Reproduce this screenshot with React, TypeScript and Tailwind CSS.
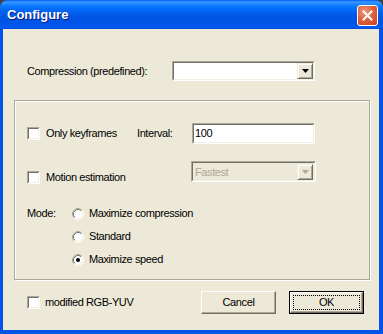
import React from "react";

function Sunken({ className, innerClass, children }: { className: string; innerClass: string; children?: React.ReactNode }) {
  return (
    <div className={`border border-t-[#aca899] border-l-[#aca899] border-b-white border-r-white ${className}`}>
      <div className={`h-full w-full border border-t-[#716f64] border-l-[#716f64] border-b-[#f1efe2] border-r-[#f1efe2] ${innerClass}`}>
        {children}
      </div>
    </div>
  );
}

function Checkbox() {
  return <Sunken className="w-[13px] h-[13px] shrink-0" innerClass="bg-white" />;
}

function Radio({ checked }: { checked?: boolean }) {
  return (
    <svg width="12" height="12" viewBox="0 0 12 12" className="shrink-0">
      <circle cx="6" cy="6" r="5" fill="#ffffff" />
      <path d="M2.11 9.89 A5.5 5.5 0 0 1 9.89 2.11" fill="none" stroke="#aca899" strokeWidth="1" />
      <path d="M9.89 2.11 A5.5 5.5 0 0 1 2.11 9.89" fill="none" stroke="#ffffff" strokeWidth="1" />
      <path d="M2.82 9.18 A4.5 4.5 0 0 1 9.18 2.82" fill="none" stroke="#716f64" strokeWidth="1" />
      <path d="M9.18 2.82 A4.5 4.5 0 0 1 2.82 9.18" fill="none" stroke="#f1efe2" strokeWidth="1" />
      {checked && <circle cx="6" cy="6" r="2" fill="#000000" />}
    </svg>
  );
}

function DropButton({ disabled }: { disabled?: boolean }) {
  return (
    <div className="w-[16px] h-[16px] border border-t-[#f1efe2] border-l-[#f1efe2] border-b-[#716f64] border-r-[#716f64] bg-[#ece9d8] shadow-[inset_1px_1px_0_#ffffff,inset_-1px_-1px_0_#aca899] flex items-center justify-center">
      <svg width="7" height="4" viewBox="0 0 7 4">
        <path d="M0 0 H7 L3.5 4 Z" fill={disabled ? "#aca899" : "#000000"} />
      </svg>
    </div>
  );
}

function Button({ children, isDefault }: { children: React.ReactNode; isDefault?: boolean }) {
  if (isDefault) {
    return (
      <div className="w-[75px] h-[23px] border border-black">
        <div className="h-full w-full border border-t-white border-l-white border-b-[#716f64] border-r-[#716f64] bg-[#ece9d8] shadow-[inset_-1px_-1px_0_#aca899] flex items-center justify-center p-[2px]">
          <div className="h-full w-full border border-dotted border-black flex items-center justify-center">
            {children}
          </div>
        </div>
      </div>
    );
  }
  return (
    <div className="w-[75px] h-[23px] border border-t-white border-l-white border-b-[#716f64] border-r-[#716f64] bg-[#ece9d8] shadow-[inset_-1px_-1px_0_#aca899] flex items-center justify-center">
      {children}
    </div>
  );
}

function CloseButton() {
  return (
    <div className="w-[21px] h-[21px] rounded-[3px] border border-white bg-[radial-gradient(circle_at_35%_30%,#f0967a_0%,#e0643f_45%,#c8401b_100%)] flex items-center justify-center">
      <svg width="11" height="11" viewBox="0 0 11 11">
        <path d="M1.5 1.5 L9.5 9.5 M9.5 1.5 L1.5 9.5" stroke="#ffffff" strokeWidth="2" strokeLinecap="square" />
      </svg>
    </div>
  );
}

export default function App() {
  return (
    <div className="w-[383px] h-[334px] bg-[#404040] font-['Liberation_Sans',Arial,sans-serif]">
      <div className="w-[383px] h-[334px] rounded-t-[8px] bg-[#0055e5] flex flex-col overflow-hidden">
        <div className="h-[29px] shrink-0 flex items-start justify-between pl-[7px] pr-[5px] bg-[linear-gradient(to_bottom,#0058ee_0%,#3593ff_6%,#288eff_12%,#127dff_18%,#036ffc_28%,#0262ee_42%,#0057e5_56%,#0054e3_72%,#0055eb_86%,#005bf5_94%,#0047d4_100%)]">
          <span className="mt-[7px] text-white font-bold text-[13px] leading-[16px] [text-shadow:1px_1px_0_#0a1883]">Configure</span>
          <div className="mt-[5px]">
            <CloseButton />
          </div>
        </div>
        <div className="ml-[3px] mr-[4px] h-[301px] bg-[#ece9d8] flex flex-col text-[11px] tracking-[-0.4px] text-black leading-[13px]">
          {/* Compression row */}
          <div className="mt-[32px] h-[20px] flex items-center pl-[24px]">
            <span className="w-[145px]">Compression (predefined):</span>
            <Sunken className="w-[143px] h-[20px]" innerClass="bg-white flex justify-end items-start">
              <DropButton />
            </Sunken>
          </div>

          {/* Group box */}
          <div className="mt-[19px] ml-[11px] w-[356px] h-[180px] border border-[#aca899] shadow-[inset_1px_1px_0_#ffffff,1px_1px_0_#ffffff] flex flex-col">
            <div className="mt-[22px] h-[21px] flex items-center pl-[12px]">
              <Checkbox />
              <span className="ml-[6px] w-[91px]">Only keyframes</span>
              <span className="w-[55px]">Interval:</span>
              <Sunken className="w-[123px] h-[21px]" innerClass="bg-white flex items-center pl-[1px]">
                <span>100</span>
              </Sunken>
            </div>

            <div className="mt-[17px] h-[21px] flex items-start">
              <div className="w-[176px] pl-[12px] pt-[10px] flex items-center h-[23px]">
                <Checkbox />
                <span className="ml-[6px]">Motion estimation</span>
              </div>
              <Sunken className="w-[125px] h-[21px]" innerClass="bg-[#ece9d8] flex items-start justify-between">
                <span className="text-[#aca899] pl-[2px] pt-[3px]">Fastest</span>
                <div className="mt-[1px] mr-[1px]">
                  <DropButton disabled />
                </div>
              </Sunken>
            </div>

            <div className="mt-[20px] flex flex-col">
              <div className="h-[23px] flex items-center pl-[12px]">
                <span className="w-[45px]">Mode:</span>
                <Radio />
                <span className="ml-[5px]">Maximize compression</span>
              </div>
              <div className="h-[23px] flex items-center pl-[57px]">
                <Radio />
                <span className="ml-[5px]">Standard</span>
              </div>
              <div className="h-[23px] flex items-center pl-[57px]">
                <Radio checked />
                <span className="ml-[5px]">Maximize speed</span>
              </div>
            </div>
          </div>

          {/* Bottom row */}
          <div className="mt-[11px] h-[23px] flex items-center pl-[24px]">
            <div className="w-[174px] flex items-center">
              <Checkbox />
              <span className="ml-[5px]">modified RGB-YUV</span>
            </div>
            <Button>Cancel</Button>
            <div className="ml-[13px]">
              <Button isDefault>OK</Button>
            </div>
          </div>
        </div>
      </div>
    </div>
  );
}
